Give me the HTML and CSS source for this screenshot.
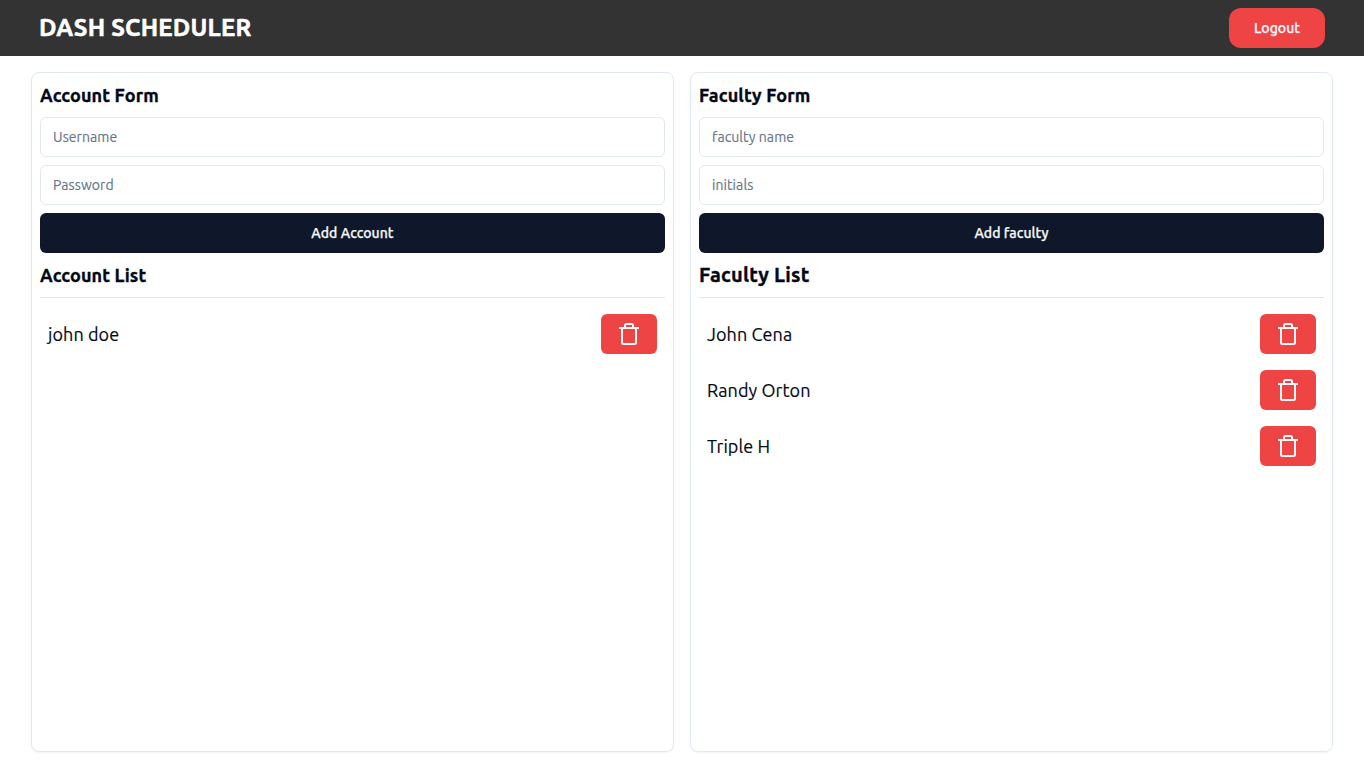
FILE: index.html
```html
<!DOCTYPE html>
<html lang="en">
<head>
<meta charset="utf-8">
<title>Dash Scheduler</title>
<link rel="stylesheet" href="styles.css">
</head>
<body>
<svg class="sprite" aria-hidden="true">
  <symbol id="trash" viewBox="0 0 24 24">
    <path d="M2 6H22M5 6V20.5Q5 22 6.5 22H17.5Q19 22 19 20.5V6M8 6V3.5Q8 2 9.5 2H14.5Q16 2 16 3.5V6" fill="none" stroke="currentColor" stroke-width="2"/>
  </symbol>
</svg>
<header class="topbar">
  <h1 class="brand">DASH SCHEDULER</h1>
  <button class="logout">Logout</button>
</header>
<main class="panels">
  <section class="card">
    <h2 class="title">Account Form</h2>
    <input class="field" placeholder="Username">
    <input class="field" placeholder="Password">
    <button class="submit">Add Account</button>
    <h2 class="title">Account List</h2>
    <ul class="list">
      <li class="row"><span class="name">john doe</span><button class="delete" aria-label="Delete"><svg class="icon"><use href="#trash"/></svg></button></li>
    </ul>
  </section>
  <section class="card">
    <h2 class="title">Faculty Form</h2>
    <input class="field" placeholder="faculty name">
    <input class="field" placeholder="initials">
    <button class="submit">Add faculty</button>
    <h2 class="title large">Faculty List</h2>
    <ul class="list">
      <li class="row"><span class="name">John Cena</span><button class="delete" aria-label="Delete"><svg class="icon"><use href="#trash"/></svg></button></li>
      <li class="row"><span class="name">Randy Orton</span><button class="delete" aria-label="Delete"><svg class="icon"><use href="#trash"/></svg></button></li>
      <li class="row"><span class="name">Triple H</span><button class="delete" aria-label="Delete"><svg class="icon"><use href="#trash"/></svg></button></li>
    </ul>
  </section>
</main>
</body>
</html>
```
FILE: styles.css
```css
* { box-sizing: border-box; margin: 0; padding: 0; }
body {
  height: 767px;
  display: flex;
  flex-direction: column;
  overflow: hidden;
  background: #fff;
  color: #020817;
  font-family: Ubuntu, "Noto Sans", sans-serif;
}
.sprite { display: none; }
button, input { font-family: inherit; border: 0; }
.topbar {
  height: 56px;
  flex: none;
  display: flex;
  align-items: center;
  justify-content: space-between;
  padding: 0 39px;
  background: #333;
  color: #fff;
}
.brand {
  font-size: 24px;
  font-weight: 700;
  line-height: 32px;
  letter-spacing: 0.24px;
  -webkit-text-stroke: 0.5px currentColor;
}
.logout {
  width: 96px;
  height: 40px;
  border-radius: 12px;
  background: #ef4444;
  color: #f8fafc;
  font-size: 14px;
  line-height: 20px;
  font-weight: 500;
  letter-spacing: 0.05px;
  -webkit-text-stroke: 0.25px currentColor;
}
.panels {
  flex: 1;
  display: grid;
  grid-template-columns: 1fr 1fr;
  gap: 16px;
  padding: 16px 31px 15px;
}
.card {
  display: flex;
  flex-direction: column;
  gap: 8px;
  padding: 8px;
  border: 1px solid #e2e8f0;
  border-radius: 8px;
  box-shadow: 0 1px 2px rgba(0, 0, 0, 0.05);
}
.title {
  height: 28px;
  line-height: 28px;
  font-size: 18px;
  font-weight: 700;
  letter-spacing: 0.15px;
  white-space: nowrap;
  -webkit-text-stroke: 0.35px currentColor;
}
.large { font-size: 20px; letter-spacing: 0.22px; }
.field {
  height: 40px;
  padding: 8px 12px;
  border: 1px solid #e2e8f0;
  border-radius: 6px;
  background: #fff;
  font-size: 14px;
  line-height: 20px;
  letter-spacing: 0.08px;
}
.field::placeholder { color: #64748b; -webkit-text-stroke: 0.15px currentColor; }
.submit {
  height: 40px;
  border-radius: 6px;
  background: #0f172a;
  color: #f8fafc;
  font-size: 14px;
  line-height: 20px;
  font-weight: 500;
  letter-spacing: 0.05px;
  -webkit-text-stroke: 0.25px currentColor;
}
.list { list-style: none; border-top: 1px solid #e2e8f0; padding-top: 8px; }
.row { display: flex; align-items: center; justify-content: space-between; height: 56px; padding: 8px; }
.name { font-size: 18px; line-height: 28px; letter-spacing: 0.08px; -webkit-text-stroke: 0.15px currentColor; }
.delete {
  display: flex;
  align-items: center;
  justify-content: center;
  width: 56px;
  height: 40px;
  border-radius: 6px;
  background: #ef4444;
  color: #f8fafc;
}
.icon { width: 24px; height: 24px; }
```
